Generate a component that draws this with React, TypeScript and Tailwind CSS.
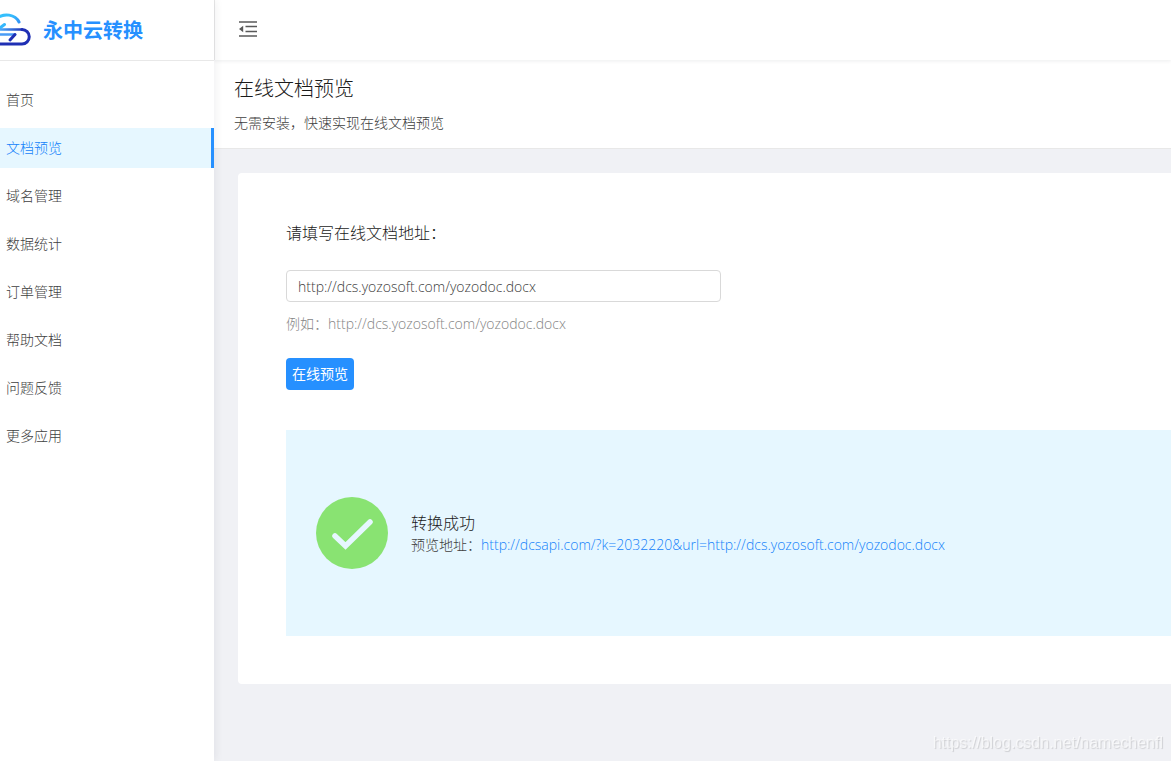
import clsx from "clsx"

const menu = [
  "首页",
  "文档预览",
  "域名管理",
  "数据统计",
  "订单管理",
  "帮助文档",
  "问题反馈",
  "更多应用",
]

const current = "文档预览"

function Logo() {
  return (
    <svg width="32" height="34" viewBox="0 0 32 34" fill="none" strokeWidth="3" strokeLinecap="round" aria-hidden="true">
      <defs>
        <linearGradient id="arc" x1="0" y1="0" x2="20" y2="10" gradientUnits="userSpaceOnUse">
          <stop stopColor="#35c3fd" />
          <stop offset="0.6" stopColor="#35b8fc" />
          <stop offset="1" stopColor="#3090f5" />
        </linearGradient>
        <linearGradient id="bar" x1="0" y1="0" x2="24" y2="0" gradientUnits="userSpaceOnUse">
          <stop stopColor="#4aa8fa" />
          <stop offset="1" stopColor="#1f2fb4" />
        </linearGradient>
      </defs>
      <path d="M-3 5C4 0 15 1 19 9" stroke="url(#arc)" />
      <path d="M-2 16.500L4.500 11.500" stroke="#35b8fc" />
      <path d="M-2 16.500H22" stroke="url(#bar)" strokeWidth="2.600" />
      <path d="M-2 21.500H15" stroke="#4a9cf6" strokeWidth="2.600" />
      <path d="M22 16.500A7.250 7.250 0 0 1 22 31H-2" stroke="#1f2fb4" />
      <path d="M15 21.500L10 27" stroke="#1f2fb4" />
    </svg>
  )
}

function FoldIcon() {
  return (
    <svg width="18" height="16" viewBox="0 0 18 16" fill="currentColor" aria-hidden="true">
      <path d="M0 0.200H18V1.800H0zM6.500 4.700H18V6.300H6.500zM6.500 9.700H18V11.300H6.500zM0 14.200H18V15.800H0z" />
      <path d="M0 8L4.200 4.800V11.200z" />
    </svg>
  )
}

function Sidebar() {
  return (
    <aside className="relative z-10 w-[214px] shrink-0 bg-white shadow-[2px_0_8px_rgba(0,21,41,0.06)]">
      <div className="flex h-[61px] items-center gap-[11px] border-b border-[#e8e8e8]">
        <Logo />
        <span className="font-['Noto_Sans_CJK_SC',sans-serif] text-xl font-bold text-[#2690ff]">永中云转换</span>
      </div>
      <nav className="flex flex-col gap-2 pt-[19px]">
        {menu.map((item) => (
          <a
            key={item}
            href="#"
            className={clsx(
              "flex h-10 items-center border-r-[3px] pl-1.5",
              item === current
                ? "border-[#2690ff] bg-[#e6f7ff] text-[#1482fa]"
                : "border-transparent"
            )}
          >
            {item}
          </a>
        ))}
      </nav>
    </aside>
  )
}

function Success() {
  return (
    <div className="mt-10 flex h-[206px] items-center gap-[23px] bg-[#e6f7ff] pl-[30px]">
      <svg width="72" height="72" viewBox="0 0 72 72" fill="none" aria-hidden="true">
        <circle cx="36" cy="36" r="36" fill="#89e372" />
        <path d="M19 39L29.500 49L54 25" stroke="#e6f7ff" strokeWidth="5.500" strokeLinecap="round" />
      </svg>
      <div>
        <h3 className="text-base text-[#1a1a1a]">转换成功</h3>
        <p>
          预览地址：
          <a href="#" className="text-[#1482fa]">
            http://dcsapi.com/?k=2032220&amp;url=http://dcs.yozosoft.com/yozodoc.docx
          </a>
        </p>
      </div>
    </div>
  )
}

export default function App() {
  return (
    <div className="flex min-h-screen overflow-hidden bg-[#f0f1f5] font-['Open_Sans','Noto_Sans_CJK_SC',sans-serif] text-sm font-light text-[#404040]">
      <Sidebar />
      <div className="flex min-w-0 flex-1 flex-col">
        <header className="relative flex h-[60px] items-center border-l border-[#e8e8e8] bg-white px-6 pb-0.5 shadow-[0_1px_4px_rgba(0,21,41,0.08)]">
          <button type="button" aria-label="收起菜单" className="text-[#595959]">
            <FoldIcon />
          </button>
        </header>
        <div className="h-[89px] border-b border-[#e8e8e8] bg-white px-5 pt-[15px]">
          <h1 className="text-xl text-[#1a1a1a]">在线文档预览</h1>
          <p className="mt-2.5">无需安装，快速实现在线文档预览</p>
        </div>
        <main className="ml-6 mt-6 rounded-l-sm bg-white py-12 pl-12">
          <form>
            <label htmlFor="url" className="block text-base text-[#1a1a1a]">
              请填写在线文档地址：
            </label>
            <input
              id="url"
              type="text"
              defaultValue="http://dcs.yozosoft.com/yozodoc.docx"
              className="mt-[25px] block h-8 w-[435px] rounded border border-[#d9d9d9] px-[11px]"
            />
            <p className="mt-3 text-[#858585]">例如：http://dcs.yozosoft.com/yozodoc.docx</p>
            <button type="button" className="mt-6 block h-8 rounded bg-[#2690ff] px-1.5 font-normal text-white">
              在线预览
            </button>
          </form>
          <Success />
        </main>
      </div>
      <span className="fixed bottom-1.5 right-2 font-['Liberation_Sans',sans-serif] text-base text-white/60 [text-shadow:1px_1px_1px_rgba(0,0,0,0.14)]">
        https://blog.csdn.net/namechenfl
      </span>
    </div>
  )
}
